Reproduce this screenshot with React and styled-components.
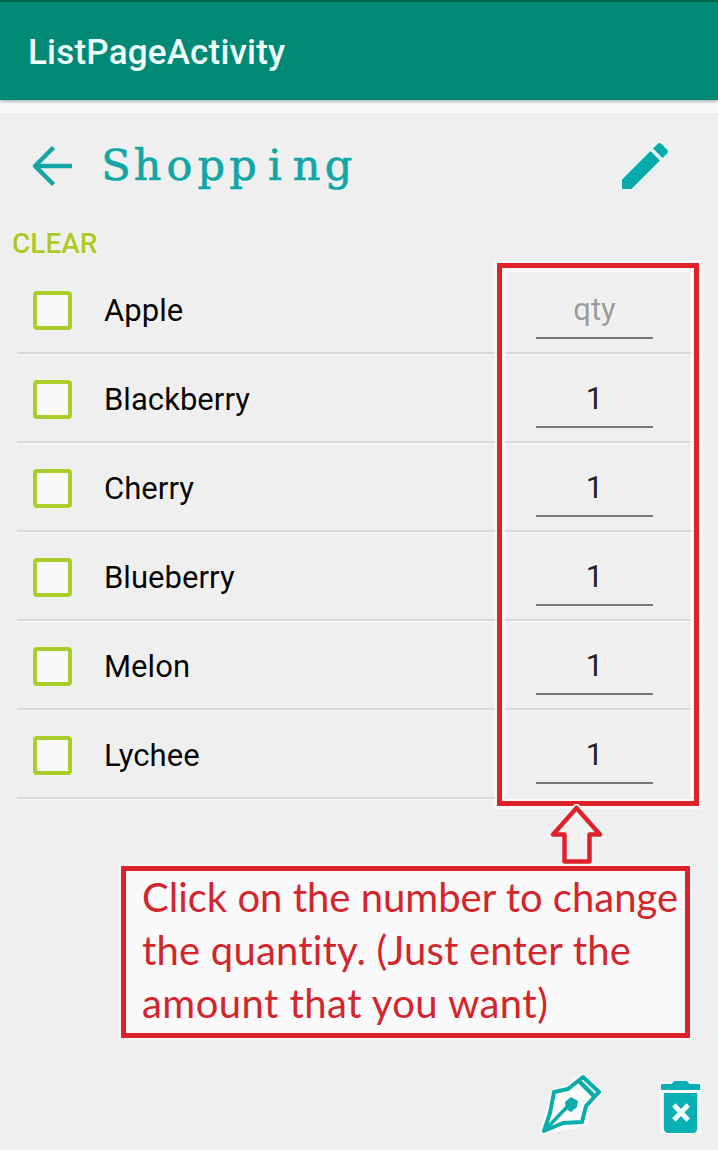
import React from "react";
import styled, { createGlobalStyle } from "styled-components";

const GlobalStyle = createGlobalStyle`
  * { box-sizing: border-box; }
  body { margin: 0; background: #efefef; font-family: Roboto, sans-serif; }
`;

const Screen = styled.main`
  position: relative;
  display: flex;
  flex-direction: column;
  width: 718px;
  height: 1150px;
  overflow: hidden;
  background: #efefef;
`;

const AppBar = styled.header`
  flex: none;
  display: flex;
  align-items: center;
  height: 100px;
  padding: 4px 28px 0;
  background: #008975;
  border-top: 2px solid #00604f;
  box-shadow: 0 1px 4px rgba(0, 0, 0, 0.4);
  z-index: 1;
`;

const AppTitle = styled.h1`
  margin: 0;
  color: #effffb;
  font-size: 35px;
  line-height: 40px;
  font-weight: 500;
  letter-spacing: 0.2px;
`;

const BarEdge = styled.div`
  flex: none;
  height: 13px;
  background: #fbf9fb;
`;

const ListHeader = styled.section`
  flex: none;
  display: flex;
  align-items: center;
  height: 106px;
  padding: 0 49px 0 31px;
`;

const ListTitle = styled.h2`
  flex: 1;
  display: flex;
  margin: -3px 0 0 27px;
  color: #14a5a5;
  font-family: "DejaVu Serif", serif;
  font-size: 43px;
  line-height: 56px;
  font-weight: 400;
  -webkit-text-stroke: 0.7px #14a5a5;
  text-shadow: 0 0 3px #effcfc, 0 0 3px #effcfc;
`;

const TypedLetter = styled.span`
  width: 31.8px;
  text-align: center;
`;

const ClearButton = styled.button`
  flex: none;
  align-self: flex-start;
  height: 46px;
  padding: 2px 0 0;
  margin-left: 12px;
  border: 0;
  background: none;
  color: #adc928;
  font: 500 28px/46px Roboto, sans-serif;
  text-shadow: 0 0 3px #fcffe8;
`;

const Items = styled.ul`
  flex: none;
  margin: 0 18px 0 17px;
  padding: 0;
  list-style: none;
`;

const Item = styled.li`
  display: flex;
  align-items: center;
  height: 89px;
  padding: 3px 47px 0 16px;
  border-bottom: 2px solid #d9d9d9;
  box-shadow: 0 1px 1px #f9f9f9;
`;

const Checkbox = styled.span`
  flex: none;
  width: 39px;
  height: 39px;
  border: 4px solid #a9cd29;
  border-radius: 4px;
  background: #fafafa;
  box-shadow: 0 0 2px #fbffe4;
`;

const ItemName = styled.span`
  flex: 1;
  margin-left: 32px;
  padding-top: 2px;
  color: #050505;
  font-size: 31px;
  line-height: 40px;
  letter-spacing: 0.05px;
  text-shadow: 0 0 3px #fff;
`;

const Quantity = styled.span`
  width: 117px;
  height: 58px;
  padding-top: 8px;
  border-bottom: 2px solid #777;
  color: ${(p) => (p.$hint ? "#9b9b9b" : "#222")};
  font-size: 31px;
  line-height: 42px;
  text-align: center;
  text-shadow: 0 0 3px #fff;
`;

const Highlight = styled.div`
  position: absolute;
  left: 497px;
  top: 263px;
  width: 202px;
  height: 543px;
  border: 5px solid #df222a;
  box-shadow: 0 0 0 3px rgba(255, 255, 255, 0.55), inset 0 0 0 4px rgba(255, 255, 255, 0.55);
`;

const ArrowIcon = styled.svg`
  position: absolute;
  left: 548px;
  top: 804px;
`;

const Note = styled.p`
  flex: none;
  width: 569px;
  height: 172px;
  margin: 67px 0 0 121px;
  padding: 0 0 0 16px;
  border: 5px solid #df222a;
  background: #fbfafb;
  box-shadow: 0 0 0 2px #f7f7f7;
  color: #d3252c;
  font-family: Lato, sans-serif;
  font-size: 40px;
  line-height: 53px;
  font-variant-ligatures: none;
`;

const NoteLine = styled.span`
  display: block;
  white-space: nowrap;
  letter-spacing: ${(p) => p.$tracking}px;
`;

const Footer = styled.footer`
  display: flex;
  align-items: flex-start;
  justify-content: flex-end;
  gap: 58px;
  padding: 36px 16px 0 0;
`;

const fruits = [
  ["Apple", ""],
  ["Blackberry", "1"],
  ["Cherry", "1"],
  ["Blueberry", "1"],
  ["Melon", "1"],
  ["Lychee", "1"],
];

const BackIcon = () => (
  <svg width="42" height="42" viewBox="0 0 42 42" fill="none" stroke="#14a5a5" strokeWidth="4.5">
    <path d="M41 21H4M22.500 2.500L4 21l18.500 18.500" strokeLinejoin="round" />
  </svg>
);

const PencilIcon = () => (
  <svg width="48" height="48" viewBox="0 0 48 48" fill="#08aaaa" stroke="#e6ffff" strokeWidth="2" paintOrder="stroke" overflow="visible">
    <path d="M1 37.500L29.500 9 39 18.500 10.500 47H1z" />
    <path d="M32 6.500L36.500 2q2-2 4 0L46 7.500q2 2 0 4L41.500 16z" />
  </svg>
);

const PenIcon = () => (
  <svg width="60" height="60" viewBox="0 0 60 60" fill="none" stroke="#0aabad" strokeWidth="4" strokeLinejoin="round">
    <path d="M2 57L13 18l14-3L40 3l16 15-11 14-3 16z" fill="#fafafa" stroke="#fafafa" strokeWidth="8" />
    <path d="M2 57L8 39 12 18l14-3L41 3l16 15-13 14-4 16-19 1z" />
    <path d="M37 7l15 15" strokeWidth="4.500" />
    <path d="M3 56l23-24" strokeWidth="3.500" />
    <path d="M23 28l6-5 7 4-1 6-6 5-5-3z" fill="#0aabad" stroke="none" />
  </svg>
);

const TrashSvg = styled.svg`
  margin-top: 6px;
`;

const TrashIcon = () => (
  <TrashSvg width="42" height="56" viewBox="0 0 44 56" preserveAspectRatio="none" overflow="visible">
    <path d="M0 2h43v52H0z" fill="#f8fbfb" />
    <path d="M2 4h10l3-3h13l3 3h10q1 0 1 1v5H1V5q0-1 1-1zM4 13h35v35q0 5-5 5H9q-5 0-5-5z" fill="#08b0b4" />
    <path d="M14.500 25l15 15M29.500 25L14.500 40" stroke="#f1ffff" strokeWidth="5" />
  </TrashSvg>
);

export default function App() {
  return (
    <>
      <GlobalStyle />
      <Screen>
        <AppBar><AppTitle>ListPageActivity</AppTitle></AppBar>
        <BarEdge />
        <ListHeader>
          <BackIcon />
          <ListTitle>
            {[..."Shopping"].map((letter, i) => <TypedLetter key={i}>{letter}</TypedLetter>)}
          </ListTitle>
          <PencilIcon />
        </ListHeader>
        <ClearButton>CLEAR</ClearButton>
        <Items>
          {fruits.map(([name, quantity]) => (
            <Item key={name}>
              <Checkbox />
              <ItemName>{name}</ItemName>
              <Quantity $hint={!quantity}>{quantity || "qty"}</Quantity>
            </Item>
          ))}
        </Items>
        <Note>
          <NoteLine $tracking={0}>Click on the number to change</NoteLine>
          <NoteLine $tracking={0.2}>the quantity. (Just enter the</NoteLine>
          <NoteLine $tracking={0.45}>amount that you want)</NoteLine>
        </Note>
        <Footer><PenIcon /><TrashIcon /></Footer>
        <Highlight />
        <ArrowIcon width="58" height="62" viewBox="0 0 58 62">
          <path d="M28.500 4L52 30H41.500V57H17.500V30H5z" fill="#f5f4f5" stroke="#f8f8f8" strokeWidth="8" />
          <path d="M28.500 4L52 30.500H41.500V57.500H16.500V30.500H5z" fill="#f3f2f3" stroke="#df222a" strokeWidth="4.500" strokeLinejoin="round" />
        </ArrowIcon>
      </Screen>
    </>
  );
}
